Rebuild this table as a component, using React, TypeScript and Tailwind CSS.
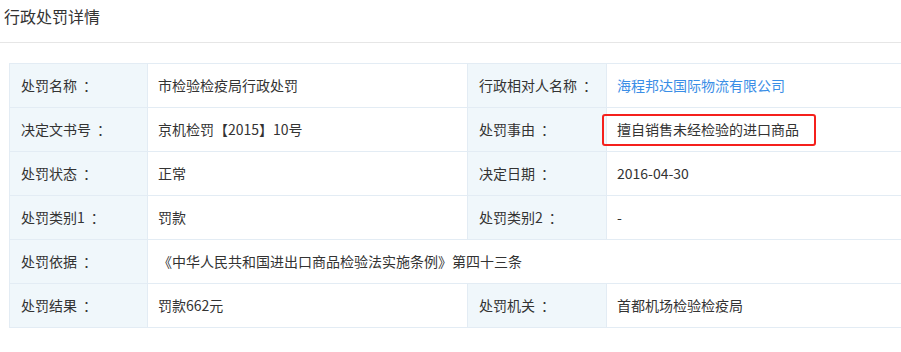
type Cell = { label: string; value: React.ReactNode };

const font = "font-['Microsoft_YaHei','Noto_Sans_CJK_SC','Noto_Sans',sans-serif]";

function Label({ children }: { children: string }) {
  return (
    <td className="h-[44px] border border-[#e3ecf4] bg-[#f0f7fb] pl-[11px] text-[14px] text-[#333] align-middle">
      {children}
      <span className="ml-[6px]">：</span>
    </td>
  );
}

function Value({ children, span }: { children: React.ReactNode; span?: number }) {
  return (
    <td colSpan={span} className="h-[44px] border border-[#e3ecf4] bg-white pl-[10px] text-[14px] text-[#333] align-middle">
      {children}
    </td>
  );
}

export default function App() {
  const rows: Cell[][] = [
    [
      { label: "处罚名称", value: "市检验检疫局行政处罚" },
      {
        label: "行政相对人名称",
        value: <span className="text-[#3a8ee6]">海程邦达国际物流有限公司</span>,
      },
    ],
    [
      { label: "决定文书号", value: "京机检罚【2015】10号" },
      {
        label: "处罚事由",
        value: (
          <span className="-ml-[15px] inline-flex h-[32px] items-center rounded-[3px] border-2 border-[#f5201c] pl-[13px] pr-[15px]">
            擅自销售未经检验的进口商品
          </span>
        ),
      },
    ],
    [
      { label: "处罚状态", value: "正常" },
      { label: "决定日期", value: "2016-04-30" },
    ],
    [
      { label: "处罚类别1", value: "罚款" },
      { label: "处罚类别2", value: "-" },
    ],
  ];

  return (
    <div className={`w-[901px] h-[352px] overflow-hidden bg-white ${font}`}>
      {/* Header */}
      <div className="h-[43px] border-b border-[#e6e6e6] pl-[4px] pt-[5px] text-[16px] leading-[22px] text-[#333]">
        行政处罚详情
      </div>

      <div className="pl-[9px] pt-[20px]">
        <table className="w-[920px] table-fixed border-collapse">
          <colgroup>
            <col className="w-[138px]" />
            <col className="w-[320px]" />
            <col className="w-[139px]" />
            <col />
          </colgroup>
          <tbody>
            {rows.map((r, i) => (
              <tr key={i}>
                <Label>{r[0].label}</Label>
                <Value>{r[0].value}</Value>
                <Label>{r[1].label}</Label>
                <Value>{r[1].value}</Value>
              </tr>
            ))}
            <tr>
              <Label>处罚依据</Label>
              <Value span={3}>《中华人民共和国进出口商品检验法实施条例》第四十三条</Value>
            </tr>
            <tr>
              <Label>处罚结果</Label>
              <Value>罚款662元</Value>
              <Label>处罚机关</Label>
              <Value>首都机场检验检疫局</Value>
            </tr>
          </tbody>
        </table>
      </div>
    </div>
  );
}
